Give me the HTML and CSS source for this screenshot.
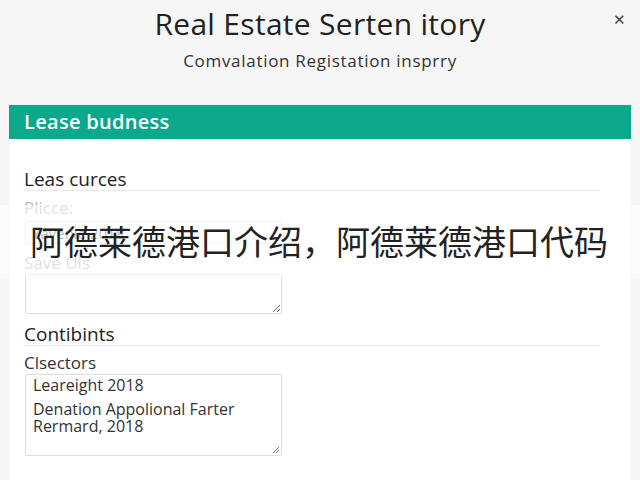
FILE: index.html
```html
<!DOCTYPE html>
<html>
<head>
<meta charset="utf-8">
<link rel="stylesheet" href="styles.css">
</head>
<body>
<header class="top">
  <h1 class="title">Real Estate Serten itory</h1>
  <p class="subtitle">Comvalation Registation insprry</p>
  <span class="close">&#x2715;</span>
</header>
<main class="card">
  <div class="card-head">Lease budness</div>
  <div class="card-body">
    <h2 class="section">Leas curces</h2>
    <label class="label">Plicce:</label>
    <input class="input" type="text" placeholder="Yavenie 2018">
    <label class="label second">Save Uls</label>
    <textarea class="area small"></textarea>
    <h2 class="section second">Contibints</h2>
    <label class="label dark">Clsectors</label>
    <div class="area big">
      <div class="line">Leareight 2018</div>
      <div class="line tight gap">Denation Appolional Farter</div>
      <div class="line tight">Rermard, 2018</div>
      <svg class="grip" width="10" height="10" viewBox="0 0 10 10"><path d="M9 3 L3 9 M9 6 L6 9" stroke="#777" stroke-width="1"/></svg>
    </div>
  </div>
</main>
<div class="overlay">阿德莱德港口介绍，阿德莱德港口代码</div>
</body>
</html>
```
FILE: styles.css
```css
html, body {
  margin: 0;
  padding: 0;
}
body {
  width: 640px;
  height: 480px;
  overflow: hidden;
  background: #f6f6f6;
  font-family: "Open Sans", "Noto Sans", sans-serif;
  color: #222;
  position: relative;
}
.top {
  text-align: center;
  padding-top: 6px;
  height: 99px;
  box-sizing: border-box;
}
.title {
  margin: 0;
  font-size: 30px;
  font-weight: 500;
  line-height: 36px;
  color: #222;
  letter-spacing: 0.3px;
}
.subtitle {
  margin: 9px 0 0;
  font-size: 17px;
  line-height: 20px;
  color: #333;
  letter-spacing: 0.7px;
}
.close {
  position: absolute;
  top: 9px;
  right: 14px;
  font-size: 15px;
  color: #444;
}
.card {
  margin: 6px 9px 0;
  background: #fff;
  height: 380px;
  box-shadow: 0 0 2px rgba(0,0,0,0.06);
}
.card-head {
  background: #0ba88b;
  color: #fff;
  height: 34px;
  line-height: 34px;
  padding-left: 15px;
  font-size: 20px;
  font-weight: 600;
  letter-spacing: 0.3px;
}
.card-body {
  padding: 29px 31px 0 15px;
  display: flex;
  flex-direction: column;
  align-items: flex-start;
}
.section {
  align-self: stretch;
  margin: 0;
  font-size: 19px;
  font-weight: 400;
  line-height: 22px;
  padding-bottom: 0;
  border-bottom: 1px solid #e8e8e8;
  color: #222;
}
.section.second {
  margin-top: 9px;
}
.label {
  font-size: 17px;
  line-height: 20px;
  color: #bbb;
  margin-top: 7px;
}
.label.second {
  margin-top: 9px;
}
.label.dark {
  color: #333;
  margin-top: 7px;
}
.input {
  width: 257px;
  height: 23px;
  box-sizing: border-box;
  border: 1px solid #e4e4e4;
  margin: 3px 0 0 1px;
  font-family: inherit;
  font-size: 15px;
  color: #999;
  padding: 0 6px;
}
.area {
  width: 257px;
  box-sizing: border-box;
  border: 1px solid #ddd;
  border-radius: 2px;
  margin-left: 1px;
  font-family: inherit;
}
.area.small {
  height: 40px;
  margin-top: 1px;
  resize: both;
}
.area.big {
  position: relative;
  height: 82px;
  margin-top: 1px;
  padding: 1px 7px;
  font-size: 16px;
  color: #333;
}
.line {
  line-height: 19px;
}
.line.tight {
  line-height: 17px;
}
.line.gap {
  margin-top: 6px;
}
.grip {
  position: absolute;
  right: 1px;
  bottom: 1px;
}
.overlay {
  position: absolute;
  left: 0;
  right: 0;
  top: 205px;
  height: 73px;
  box-sizing: border-box;
  padding: 16px 0 0 30px;
  background: rgba(255,255,255,0.55);
  font-family: "Noto Sans CJK SC", sans-serif;
  font-size: 34px;
  line-height: 40px;
  color: #222;
  white-space: nowrap;
}
```
